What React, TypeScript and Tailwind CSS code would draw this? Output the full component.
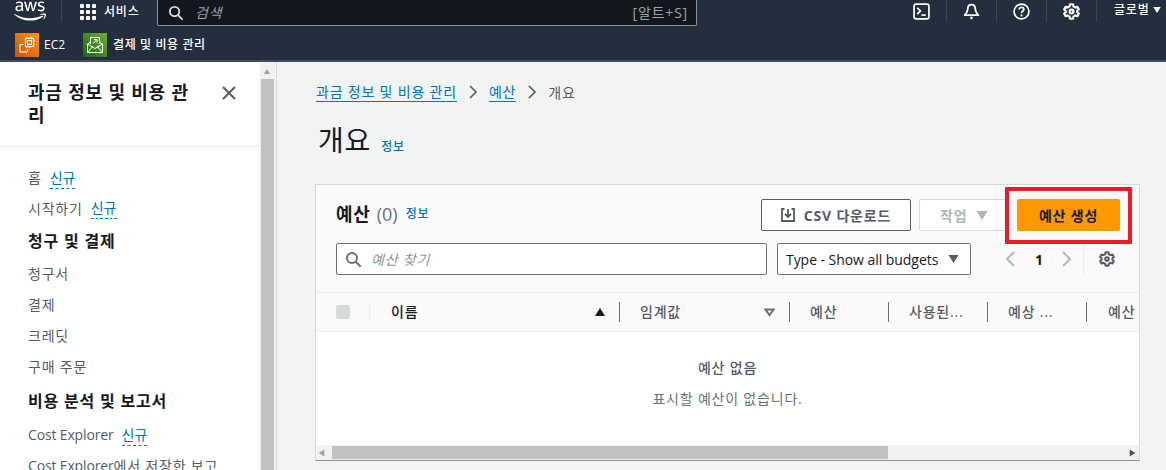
import React from "react";
import { FaAws } from "react-icons/fa";

const font = { fontFamily: '"Open Sans","Noto Sans CJK KR",sans-serif' };

function Grid() {
  const cells = [];
  for (let i = 0; i < 9; i++) cells.push(<span key={i} className="w-1 h-1 bg-white rounded-[1px]" />);
  return <div className="grid grid-cols-3 gap-[2px] w-4 h-4 shrink-0">{cells}</div>;
}

function Ec2Icon() {
  return (
    <svg width="24" height="24" viewBox="0 0 24 24" className="shrink-0">
      <defs>
        <linearGradient id="ec" x1="0" y1="1" x2="1" y2="0">
          <stop offset="0" stopColor="#c8511b" />
          <stop offset="1" stopColor="#ff9900" />
        </linearGradient>
      </defs>
      <rect width="24" height="24" fill="url(#ec)" />
      <g fill="none" stroke="#fff" strokeWidth="1">
        <rect x="10.5" y="5.5" width="8" height="8" />
        <rect x="12.5" y="7.5" width="4" height="4" />
        <path d="M8.5 11.5H5v7.5h7.5V16" />
        <path d="M12 4v1.5M15 4v1.5M17 4v1.5M12 13.5V15M15 13.5V15M19 8h1M19 11h1" />
      </g>
    </svg>
  );
}

function BillingIcon() {
  return (
    <svg width="24" height="24" viewBox="0 0 24 24" className="shrink-0">
      <defs>
        <linearGradient id="bl" x1="0" y1="1" x2="1" y2="0">
          <stop offset="0" stopColor="#1b660f" />
          <stop offset="1" stopColor="#6cae3e" />
        </linearGradient>
      </defs>
      <rect width="24" height="24" fill="url(#bl)" />
      <g fill="none" stroke="#fff" strokeWidth="1">
        <path d="M4.5 11 7.5 9M19.5 11l-3-2M4.5 11v8.5h15V11L12 15.5 4.5 11ZM4.5 19.5l5.5-6.5M19.5 19.5 14 13" />
        <path d="M7.5 11V4.5h9V11" />
        <path d="M10 10.5 14 6.5M11 6.5h3v3" />
      </g>
    </svg>
  );
}

function Gear({ size = 18, color = "#fff" }: { size?: number; color?: string }) {
  return (
    <svg width={size} height={size} viewBox="0 0 16 16" fill="none" stroke={color} strokeWidth="2" strokeLinejoin="round" className="shrink-0">
      <path d="M6.6 1.2h2.8l.4 2 1.8 1 1.9-.7 1.4 2.5-1.5 1.3v1.4l1.500 1.300-1.400 2.500-1.900-.7-1.800 1-.4 2H6.600l-.4-2-1.800-1-1.900.7L1.100 10l1.500-1.300V7.300L1.100 6l1.400-2.500 1.900.7 1.800-1 .4-2Z" />
      <circle cx="8" cy="8" r="1.8" />
    </svg>
  );
}

function Search({ color, size = 16 }: { color: string; size?: number }) {
  return (
    <svg width={size} height={size} viewBox="0 0 16 16" fill="none" stroke={color} strokeWidth="2" strokeLinecap="round" className="shrink-0">
      <circle cx="7" cy="7" r="5" />
      <path d="m11 11 4 4" />
    </svg>
  );
}

function Tri({ w, h, color, up, className = "" }: { w: number; h: number; color: string; up?: boolean; className?: string }) {
  return (
    <svg width={w} height={h} viewBox="0 0 10 8" className={"shrink-0 " + className}>
      <path d={up ? "M5 0 10 8H0Z" : "M0 0H10L5 8Z"} fill={color} />
    </svg>
  );
}

function Chevron() {
  return (
    <svg width="10" height="14" viewBox="0 0 10 14" fill="none" stroke="#545b64" strokeWidth="1.600" className="mx-[11px] shrink-0">
      <path d="m2 1 6 6-6 6" />
    </svg>
  );
}

function NewTag() {
  return <span className="ml-[8px] pb-[2px] text-[#0073bb] border-b border-dashed border-[#0073bb] leading-[17px] inline-block tracking-normal translate-y-[1px]">신규</span>;
}

function NavItem({ children, h = 31 }: { children: React.ReactNode; h?: number }) {
  return (
    <div className="flex items-center text-[14px] text-[#545b64] whitespace-nowrap" style={{ height: h }}>
      {children}
    </div>
  );
}

function Heading({ children, h = 35 }: { children: React.ReactNode; h?: number }) {
  return <div className="flex items-center text-[16px] font-bold text-[#16191f] whitespace-nowrap" style={{ height: h }}>{children}</div>;
}

function Th({ children, w, last }: { children: React.ReactNode; w: string; last?: boolean }) {
  return (
    <div className={"flex items-center h-5 border-l border-[#687078] " + w}>
      <span className={"pb-[2px] text-[14px] font-medium text-[#545b64] whitespace-nowrap " + (last ? "ml-[21px]" : "ml-[20px]")}>{children}</span>
    </div>
  );
}

export default function App() {
  return (
    <div className="w-[1166px] h-[470px] overflow-hidden flex flex-col bg-[#f2f3f3] tracking-[0.8px]" style={font}>
      <header className="h-[62px] shrink-0 bg-[#232f3e] border-b-2 border-[#414d5c] text-white">
        <div className="h-[26px] flex">
          <div className="w-[62px] h-[22px] overflow-hidden flex justify-center shrink-0 border-r border-[#414750]">
            <FaAws className="text-[32px] -mt-[5px] -ml-[2px] text-white shrink-0" />
          </div>
          <div className="w-[95px] flex pl-[18px] pt-[1px] gap-[8px] h-[22px] items-center">
            <Grid />
            <span className="text-[12px] font-medium">서비스</span>
          </div>
          <div className="w-[540px] h-[26px] bg-[#12161d] border border-t-0 border-[#879596] rounded-b-[2px] flex items-center pl-[10px] pr-[8px]">
            <Search color="#d5dbdb" size={15} />
            <span className="ml-[12px] text-[14px] italic text-[#95a5a6]">검색</span>
            <span className="ml-auto text-[14px] text-[#95a5a6]">[알트+S]</span>
          </div>
          <div className="flex h-[22px] ml-[200px]">
            <div className="w-[50px] flex justify-center items-center border-r border-[#414750]">
              <svg width="17" height="17" viewBox="0 0 16 16" fill="none" stroke="#fff" strokeWidth="1.6">
                <rect x="1" y="1" width="14" height="14" rx="2" />
                <path d="m4 4.5 3 3-3 3M8 11.5h4" />
              </svg>
            </div>
            <div className="w-[50px] flex justify-center items-center border-r border-[#414750]">
              <svg width="17" height="17" viewBox="0 0 16 16" fill="none" stroke="#fff" strokeWidth="1.7" strokeLinejoin="round">
                <path d="M8 1.500c-2.500 0-3.500 2-3.500 4 0 2.500-1 4-3 6h13c-2-2-3-3.500-3-6 0-2-1-4-3.500-4Z" />
                <circle cx="8" cy="14" r="1.300" fill="#fff" stroke="none" />
              </svg>
            </div>
            <div className="w-[50px] flex justify-center items-center border-r border-[#414750]">
              <svg width="17" height="17" viewBox="0 0 16 16" fill="none" stroke="#fff" strokeWidth="1.6">
                <circle cx="8" cy="8" r="7" />
                <path d="M5.800 6.200C5.800 5 6.800 4.200 8 4.200s2.200.8 2.200 2c0 1.600-2.200 1.600-2.200 3.200" />
                <circle cx="8" cy="11.700" r="1" fill="#fff" stroke="none" />
              </svg>
            </div>
            <div className="w-[50px] flex justify-center items-center border-r border-[#414750]">
              <Gear size={17} />
            </div>
            <div className="flex items-center ml-[17px] text-[12px] font-medium whitespace-nowrap -mt-[3px]">
              글로벌
              <Tri w={8} h={6} color="#fff" className="ml-[3px]" />
            </div>
          </div>
        </div>
        <div className="h-[34px] flex items-center pl-[15px] pt-[4px]">
          <Ec2Icon />
          <span className="ml-[5px] text-[12px] font-medium tracking-normal">EC2</span>
          <div className="ml-[18px]"><BillingIcon /></div>
          <span className="ml-[6px] text-[12px] font-medium whitespace-nowrap tracking-[0.6px]">결제 및 비용 관리</span>
        </div>
      </header>

      <div className="flex-1 flex min-h-0">
        <aside className="w-[260px] shrink-0 bg-white overflow-hidden">
          <div className="h-[85px] border-b border-[#eaeded] pl-[28px] pt-[19px] pr-[20px] flex justify-between">
            <div className="w-[172px] text-[18px] leading-[23px] font-bold text-[#16191f]">과금 정보 및 비용 관리</div>
            <svg width="16" height="16" viewBox="0 0 16 16" fill="none" stroke="#545b64" strokeWidth="2" className="mt-[4px] mr-[3px] shrink-0">
              <path d="m2 2 12 12M14 2 2 14" />
            </svg>
          </div>
          <div className="pl-[28px] pt-[15px]">
            <NavItem>홈<NewTag /></NavItem>
            <NavItem h={30}>시작하기<NewTag /></NavItem>
            <Heading>청구 및 결제</Heading>
            <NavItem>청구서</NavItem>
            <NavItem>결제</NavItem>
            <NavItem>크레딧</NavItem>
            <NavItem>구매 주문</NavItem>
            <Heading h={37}>비용 분석 및 보고서</Heading>
            <NavItem><span className="tracking-[-0.15px]">Cost Explorer</span><NewTag /></NavItem>
            <NavItem><span className="tracking-[-0.15px]">Cost Explorer</span>에서 저장한 보고</NavItem>
          </div>
        </aside>

        <div className="w-[17px] shrink-0 bg-[#f1f1f1] border-r border-[#d5dbdb] flex flex-col items-center">
          <Tri w={8} h={5} color="#a3a3a3" up className="mt-[7px] mr-[2px]" />
          <div className="w-[13px] flex-1 bg-[#c1c1c1] mt-[5px] mr-[2px]" />
        </div>

        <main className="flex-1 min-w-0 pl-[39px] pr-[25px]">
          <nav className="flex items-center h-[20px] mt-[20px] text-[14px] text-[#545b64]">
            <span className="text-[#0073bb] border-b border-[#0073bb] leading-[18px]">과금 정보 및 비용 관리</span>
            <Chevron />
            <span className="text-[#0073bb] border-b border-[#0073bb] leading-[18px]">예산</span>
            <Chevron />
            <span>개요</span>
          </nav>
          <div className="flex items-end mt-[18px] h-[40px] pl-[2px]">
            <h1 className="text-[28px] leading-[40px] text-[#16191f]">개요</h1>
            <span className="ml-[10px] mb-[5px] text-[12px] font-medium text-[#0073bb] leading-[16px]">정보</span>
          </div>

          <section className="relative -ml-[1px] mt-[24px] w-[825px] h-[277px] bg-white border border-[#d5dbdb] border-b-[#879596] flex flex-col">
            <div className="bg-[#fafafa] h-[147px] shrink-0 border-b border-[#eaeded] flex flex-col">
              <div className="pl-[20px] pt-[14px] pr-[19px] flex items-start">
                <div className="flex items-center h-[30px]">
                  <span className="text-[18px] font-bold text-[#16191f]">예산</span>
                  <span className="ml-[6px] text-[18px] text-[#687078] tracking-normal">(0)</span>
                  <span className="ml-[8px] text-[12px] font-medium text-[#0073bb]">정보</span>
                </div>
                <div className="ml-auto flex">
                  <button className="w-[150px] h-[32px] border border-[#545b64] rounded-[2px] bg-white flex items-center justify-center gap-[9px] text-[14px] font-bold text-[#545b64] whitespace-nowrap">
                    <svg width="14" height="14" viewBox="0 0 14 14" fill="none" stroke="#545b64" strokeWidth="1.800" className="shrink-0">
                      <path d="M3.500 1H1v12h12V1h-2.500M7 1v8M4 6l3 3 3-3" />
                    </svg>
                    CSV 다운로드
                  </button>
                  <button className="ml-[8px] w-[89px] h-[32px] border border-[#d5dbdb] rounded-[2px] bg-white flex items-center pl-[20px] text-[14px] font-bold text-[#aab7b8] whitespace-nowrap">
                    작업
                    <Tri w={12} h={9} color="#aab7b8" className="ml-[9px]" />
                  </button>
                  <button className="ml-[9px] w-[103px] h-[32px] rounded-[2px] bg-[#ff9900] text-[14px] font-bold text-[#16191f] whitespace-nowrap">예산 생성</button>
                </div>
              </div>
              <div className="pl-[20px] pr-[12px] mt-[12px] flex items-center">
                <div className="w-[431px] h-[32px] border border-[#687078] rounded-[2px] bg-white flex items-center pl-[8px]">
                  <Search color="#687078" />
                  <span className="ml-[10px] text-[14px] italic text-[#879596]">예산 찾기</span>
                </div>
                <div className="ml-[10px] w-[194px] h-[32px] border border-[#687078] rounded-[2px] bg-white flex items-center pl-[8px] text-[14px] text-[#16191f] whitespace-nowrap tracking-[-0.05px]">
                  Type - Show all budgets
                  <Tri w={11} h={8} color="#545b64" className="ml-[10px]" />
                </div>
                <svg width="12" height="16" viewBox="0 0 12 16" fill="none" stroke="#aab7b8" strokeWidth="1.800" className="ml-[33px] shrink-0"><path d="M10 1 3 8l7 7" /></svg>
                <span className="ml-[19px] w-[8px] text-[14px] font-bold text-[#16191f] tracking-normal">1</span>
                <svg width="12" height="16" viewBox="0 0 12 16" fill="none" stroke="#aab7b8" strokeWidth="1.800" className="ml-[18px] shrink-0"><path d="m2 1 7 7-7 7" /></svg>
                <div className="ml-[10px] h-[32px] w-[32px] border-l border-[#eaeded] flex items-center justify-end">
                  <Gear size={16} color="#545b64" />
                </div>
              </div>
              <div className="mt-auto h-[39px] border-t border-[#eaeded] flex items-center pl-[20px]">
                <div className="w-[14px] h-[14px] bg-[#d5dbdb] rounded-[2px] shrink-0" />
                <div className="ml-[19px] w-[250px] h-5 border-l border-[#eaeded] flex items-center">
                  <span className="pb-[2px] ml-[21px] text-[14px] font-medium text-[#16191f]">이름</span>
                  <Tri w={12} h={8} color="#16191f" up className="ml-auto mr-[13px]" />
                </div>
                <div className="w-[170px] h-5 border-l border-[#687078] flex items-center">
                  <span className="pb-[2px] ml-[20px] text-[14px] font-medium text-[#545b64]">임계값</span>
                  <svg width="11" height="9" viewBox="0 0 11 9" fill="none" stroke="#687078" strokeWidth="2" className="ml-auto mr-[14px] shrink-0"><path d="M1.500 1.500h8L5.500 7Z" /></svg>
                </div>
                <Th w="w-[99px]">예산</Th>
                <Th w="w-[99px]">사용된...</Th>
                <Th w="w-[99px]">예상 ...</Th>
                <Th w="w-[53px]" last>예산</Th>
              </div>
            </div>
            <div className="flex-1 bg-white flex flex-col items-center pt-[26px]">
              <div className="text-[14px] font-medium text-[#545b64] leading-[20px]">예산 없음</div>
              <div className="mt-[11px] text-[14px] text-[#687078] leading-[20px]">표시할 예산이 없습니다.</div>
            </div>
            <div className="h-[15px] shrink-0 bg-[#f1f1f1] flex items-center">
              <Tri w={7} h={8} color="#a3a3a3" className="rotate-90 ml-[2px]" />
              <div className="ml-[7px] w-[556px] h-[13px] bg-[#c1c1c1]" />
              <Tri w={7} h={8} color="#505050" className="-rotate-90 ml-auto mr-[3px]" />
            </div>
            <div className="absolute left-[689px] top-[2px] w-[127px] h-[57px] border-[4px] border-[#ed1c24] pointer-events-none" />
          </section>
        </main>
      </div>
    </div>
  );
}
